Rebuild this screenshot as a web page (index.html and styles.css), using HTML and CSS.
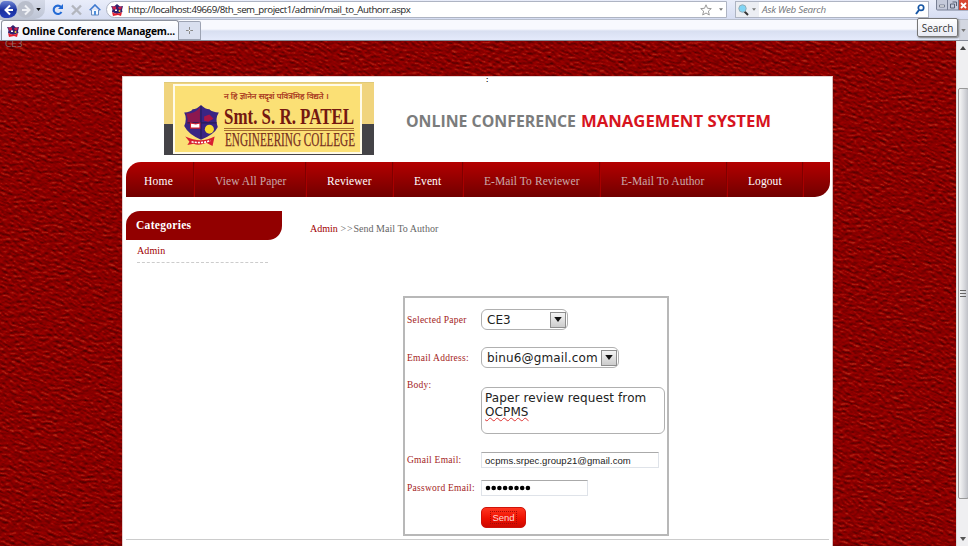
FILE: index.html
```html
<!DOCTYPE html>
<html lang="en">
<head>
<meta charset="utf-8">
<title>Online Conference Management System</title>
<link rel="stylesheet" href="styles.css">
</head>
<body>
<svg width="0" height="0" class="defs" aria-hidden="true">
  <symbol id="crest" viewBox="0 0 36 41">
    <path d="M2 8Q8 8 10 5Q14 5 18 1Q22 5 26 5Q29 8 35 8Q31 14 34 22Q31 29 18 34Q6 29 2 21Q5 14 2 8Z" fill="#392584"/>
    <path d="M4 9Q13 9 17 3V19H5Q6 14 4 9Z" fill="#8c174f"/><path d="M21 12l5-2 4 4-5 3-4-1z" fill="#a91645"/>
    <path d="M18 2V33M5 18H33" stroke="#251d58" stroke-width="1"/>
    <path d="M8 18l5 1 4-1v5H8z" fill="#fff" stroke="#cf2031"/><circle cx="26" cy="24" r="4.3" fill="#f7da32"/>
    <path d="M3 31Q18 38 31 31L29 40L23 37Q16 40 11 38L5 39L7 36Z" fill="#d81f31"/><path d="M9 36Q18 38 27 35" stroke="#fff" stroke-width="1.5" stroke-dasharray="2 1" fill="none"/>
  </symbol>
  <symbol id="favicon" viewBox="0 0 12 12">
    <path d="M0 2l3 .5L6 0l3 2.5 3-.5-1 4 .5 2L6 10 1 8l.5-3z" fill="#31206f"/><path d="M1 2.5l4 0 0 3-3 0zM7 3l4-.5-1 3-2 0z" fill="#c91f4b"/><path d="M4 5.5h2v1.500H4z" fill="#fff"/><circle cx="8.5" cy="7" r="1" fill="#f4d636"/><path d="M1 8q5 3 10 0l-1 4-3-1-5 1z" fill="#e51d2c"/>
  </symbol>
  <symbol id="down" viewBox="0 0 6 4"><path d="M0 0h6L3 4z" fill="currentColor"/></symbol>
</svg>
<header class="browser">
  <div class="address-row">
    <div class="history">
      <span class="round back"><svg width="12" height="12" viewBox="0 0 12 12"><path d="M7 1.5L2.5 6 7 10.5M2.5 6H10" stroke="#fff" stroke-width="2" fill="none"/></svg></span>
      <span class="round forward"><svg width="12" height="12" viewBox="0 0 12 12"><path d="M5 1.5L9.500 6 5 10.5M9.500 6H2" stroke="#eef0f5" stroke-width="2" fill="none"/></svg></span>
      <svg class="caret dark" width="5" height="3"><use href="#down"/></svg>
    </div>
    <div class="tools">
      <svg width="12" height="12" viewBox="0 0 12 12"><path d="M9.5 8A4.2 4.2 0 1 1 9 3" fill="none" stroke="#246bd5" stroke-width="2.1"/><path d="M11 0v5H6z" fill="#246bd5"/></svg>
      <svg width="11" height="12" viewBox="0 0 11 12"><path d="M1 1.5l9 9M10 1.5l-9 9" stroke="#b3b6be" stroke-width="2.4"/></svg>
      <svg width="12" height="12" viewBox="0 0 12 12"><path d="M2.5 6v5h7V6" fill="#f5f9ff" stroke="#6689bd"/><path d="M.7 6.3L6 1l5.3 5.3" stroke="#3d78cf" stroke-width="1.6" fill="none"/><path d="M5 7h2v4H5z" fill="#4f8fdb"/></svg>
    </div>
    <div class="address"><svg width="12" height="12"><use href="#favicon"/></svg><span class="url">http://localhost:49669/8th_sem_project1/admin/mail_to_Authorr.aspx</span>
      <svg class="star" width="12" height="12" viewBox="0 0 12 12"><path d="M6 .8l1.5 3.5 3.8.3-2.9 2.5.9 3.9L6 9l-3.3 2 .9-3.9L.7 4.6l3.8-.3z" fill="#fff" stroke="#999"/></svg><svg class="caret" width="4" height="3"><use href="#down"/></svg>
    </div>
    <div class="search"><span class="provider"><svg width="11" height="12" viewBox="0 0 11 12"><path d="M6 7l4 4" stroke="#333" stroke-width="2"/><circle cx="4.5" cy="4.5" r="3.7" fill="#81d5f5" stroke="#91aeb9"/></svg><svg class="caret" width="4" height="3"><use href="#down"/></svg></span><em>Ask Web Search</em><svg width="10" height="11" viewBox="0 0 10 11"><path d="M4 6L1 10" stroke="#1756a4" stroke-width="2"/><circle cx="6" cy="3.7" r="2.7" fill="none" stroke="#1756a4" stroke-width="1.7"/></svg></div>
    <div class="window-buttons"><svg width="32" height="11" viewBox="0 0 32 11"><path d="M.5 0v9q0 1 1 1H32V0" fill="#c5cada" stroke="#777f94"/><path d="M11.5 0v10M22.5 0v10" stroke="#777f94"/><path d="M23 0h9v10h-9z" fill="#d74732"/><path d="M3.5 5h5v2h-5z" fill="#fff" stroke="#555d70" stroke-width=".7"/><path d="M14.500 4h4v4h-4zM16.500 2h4v4" fill="none" stroke="#596174"/><path d="M25 3l5 5M30 3l-5 5" stroke="#fff" stroke-width="1.8"/></svg></div>
  </div>
  <div class="tab-row"><div class="tab"><svg width="12" height="12"><use href="#favicon"/></svg><b>Online Conference Managem...</b></div><div class="new-tab"><svg width="7" height="7"><path d="M3.5 0v7M0 3.5h7" stroke="#888"/><circle cx="3.5" cy="3.5" r=".8" fill="#fff"/></svg></div><div class="tab-menu"><svg class="caret" width="5" height="3"><use href="#down"/></svg></div></div>
  <div class="tooltip">Search</div>
</header>
<div class="viewport">
  <svg class="texture" width="957" height="506" aria-hidden="true">
    <filter id="leather" x="0" y="0" width="100%" height="100%" color-interpolation-filters="sRGB">
      <feTurbulence type="fractalNoise" baseFrequency=".2 .38" numOctaves="3" seed="8" result="noise"/>
      <feColorMatrix type="matrix" values="0 0 0 0 1 0 0 0 0 1 0 0 0 0 1 1 0 0 0 0" result="height"/>
      <feDiffuseLighting in="height" surfaceScale=".9" diffuseConstant="1.08" lighting-color="#fff" result="light"><feDistantLight azimuth="245" elevation="48"/></feDiffuseLighting>
      <feColorMatrix in="light" type="matrix" values=".85 0 0 0 -.145 1.2 0 0 0 -1.04 .7 0 0 0 -.61 0 0 0 0 1"/>
    </filter>
    <g transform="rotate(24 480 250)"><rect x="-200" y="-300" width="1360" height="1100" filter="url(#leather)"/></g>
  </svg>
  <span class="status">CE3</span>
  <main class="page">
    <div class="mark">:</div>
    <div class="banner">
      <div class="logo"><div class="plate"><svg width="187" height="69" viewBox="0 0 187 69">
        <use href="#crest" x="8" y="19" width="38" height="43"/>
        <text x="50" y="14" class="motto" textLength="105" lengthAdjust="spacingAndGlyphs">न हि ज्ञानेन सदृशं पवित्रमिह विद्यते ।</text>
        <text x="50" y="39" class="college" textLength="130" lengthAdjust="spacingAndGlyphs">Smt. S. R. PATEL</text>
        <path d="M50 43.500h130M50 45.500h130" stroke="#a66c2e"/>
        <text x="51" y="61" class="college-sub" textLength="130" lengthAdjust="spacingAndGlyphs">ENGINEERING COLLEGE</text>
      </svg></div></div>
      <svg class="heading" width="370" height="24"><text x="0" y="18" textLength="170" lengthAdjust="spacingAndGlyphs" fill="#7b7c7c">ONLINE CONFERENCE</text><text x="175" y="18" textLength="190" lengthAdjust="spacingAndGlyphs" fill="#d7141e">MANAGEMENT SYSTEM</text></svg>
    </div>
    <nav><a class="home">Home</a><a class="papers dim">View All Paper</a><a class="reviewer">Reviewer</a><a class="event">Event</a><a class="mail-reviewer dim">E-Mail To Reviewer</a><a class="mail-author dim">E-Mail To Author</a><a class="logout">Logout</a></nav>
    <div class="columns">
      <aside><h2>Categories</h2><a>Admin</a></aside>
      <section>
        <div class="crumbs"><a>Admin</a> <span class="arrows">&gt;&gt;</span>Send Mail To Author</div>
        <form>
          <label>Selected Paper</label><div class="select paper"><span>CE3</span><i><svg width="8" height="5"><use href="#down"/></svg></i></div>
          <label>Email Address:</label><div class="select email"><span>binu6@gmail.com</span><i><svg width="8" height="5"><use href="#down"/></svg></i></div>
          <label class="body-label">Body:</label><div class="message">Paper review request from <span class="misspelled">OCPMS</span></div>
          <label>Gmail Email:</label><div class="input">ocpms.srpec.group21@gmail.com</div>
          <label>Password Email:</label><div class="input password"><svg width="46" height="6"><path d="M3 3H44" stroke="#000" stroke-width="4.6" stroke-linecap="round" stroke-dasharray="0 5.7"/></svg></div>
          <span></span><div class="send"><span>Send</span></div>
        </form>
      </section>
    </div>
    <hr>
  </main>
  <div class="scrollbar"><svg class="up" width="6" height="4" viewBox="0 0 6 4"><path d="M0 4h6L3 0z" fill="#444"/></svg><div class="thumb"><i></i><i></i><i></i></div><svg class="bottom" width="6" height="4"><use href="#down"/></svg></div>
</div>
</body>
</html>
```
FILE: styles.css
```css
* { box-sizing: border-box; }
body { margin: 0; width: 968px; height: 546px; overflow: hidden; font-family: "Liberation Serif", serif; }
svg { display: block; flex: none; }
.defs { position: absolute; }
.browser { position: relative; height: 41px; font-family: "Open Sans", sans-serif; border-bottom: 1px solid #858995; background: #e2e6f5; }
.address-row { height: 19px; display: flex; background: linear-gradient(#e9edfa, #d6ddf2); }
.history { display: flex; width: 45px; align-items: center; height: 19px; background: linear-gradient(#d5dae8,#bdc4d4); border-radius: 0 0 10px 0; }
.round { display: grid; place-items: center; width: 17px; height: 17px; border-radius: 9px; }
.back { background: linear-gradient(#6c83d3,#1931a0 55%,#243eb9); border-radius: 5px 9px 9px 5px; }
.forward { background: #b9becb; margin-right: 2px; }
.caret { color: #777; }
.caret.dark { color: #111; }
.tools { display: flex; align-items: center; gap: 7px; width: 61px; padding-left: 7px; }
.address { width: 621px; height: 17px; margin-top: 1px; display: flex; align-items: center; background: #fff; border: 1px solid #aeb4c3; border-radius: 9px 0 0 9px; padding-left: 4px; }
.url { flex: 1; padding-left: 5px; font-size: 9.7px; line-height: 16px; letter-spacing: -.48px; color: #222; white-space: nowrap; }
.star { margin-right: 7px; }
.address > .caret { margin-right: 3px; }
.search { width: 194px; height: 17px; margin: 1px 0 0 8px; display: flex; align-items: center; background: #fff; border: 1px solid #aeb4c3; padding-right: 3px; }
.provider { display: flex; align-items: center; height: 15px; width: 23px; padding-left: 2px; gap: 3px; background: #eceef3; }
.search em { flex: 1; padding-left: 3px; color: #72757a; font-size: 9.8px; letter-spacing: -.28px; line-height: 17px; }
.window-buttons { margin-left: 7px; }
.tab-row { height: 21px; display: flex; border-top: 1px solid #b9bfcc; background: linear-gradient(#f8f9fe 0 45%,#d8dff1 55%,#e5eafb); }
.tab { width: 178px; margin-left: 1px; border: 1px solid #8d929e; border-bottom: 0; border-radius: 3px 3px 0 0; display: flex; align-items: center; padding-left: 5px; gap: 3px; background: linear-gradient(#fff,#edf1fd); font-size: 10.3px; letter-spacing: -.17px; white-space: nowrap; }
.new-tab { width: 22px; margin-top: 1px; display: grid; place-items: center; border: 1px solid #9da3b3; border-left: 0; background: #d9dfef; border-radius: 0 2px 0 0; }
.tab-menu { display: grid; place-items: center; margin-left: auto; width: 9px; background: #d3d7e1; }
.tooltip { position: absolute; left: 917px; top: 18px; width: 41px; height: 19px; border: 1px solid #767676; border-radius: 2px; box-shadow: 1px 1px 2px #777; background: linear-gradient(#fff,#e8eaf3); font-size: 10px; line-height: 18px; text-align: center; color: #333; }
.viewport { position: relative; height: 505px; display: flex; overflow: hidden; background: #860000; }
.texture { position: absolute; left: 0; top: 0; }
.status { position: absolute; left: 5px; top: -2px; font: 9px/11px "DejaVu Sans", sans-serif; color: #8a6868; }
.page { position: relative; width: 711px; height: 470px; margin: 35px 0 0 122px; padding: 0 3px; background: #fff; border-left: 1px solid #e5cfcf; border-right: 1px solid #d8bcbc; border-top: 1px solid #e5cfcf; }
.mark { height: 5px; padding-left: 360px; font: bold 7px/5px "Liberation Sans", sans-serif; }
.banner { display: flex; height: 80px; padding-left: 38px; }
.logo { width: 210px; height: 73px; padding: 1px 12px 2px 9px; background: linear-gradient(#f0d47d 0 41px,#444347 41px); border-top: 1px solid #dfc97a; }
.plate { border: 2px solid #fffbe8; background: #fbe075; width: 189px; height: 70px; }
.plate svg { margin: -1px; }
.motto { font-family: "Noto Sans", sans-serif; font-size: 8px; fill: #a52d19; stroke: #a52d19; stroke-width: .2px; }
.college { font-family: "Liberation Serif", serif; font-weight: bold; font-size: 24px; fill: #741811; }
.college-sub { font-family: "Liberation Serif", serif; font-size: 18px; fill: #78301f; stroke: #78301f; stroke-width: .25px; }
.heading { margin: 27px 0 0 32px; font: bold 16.5px "Open Sans", sans-serif; }
nav { width: 704px; height: 35px; display: flex; border-radius: 15px 0 15px 0; background: linear-gradient(#b40000,#710000); overflow: hidden; }
nav a { height: 35px; padding-left: 21px; font-size: 11.5px; line-height: 38px; letter-spacing: .08px; color: #fff; border-right: 1px solid #800000; box-shadow: 1px 0 #a80000; white-space: nowrap; }
nav .dim { color: #c9aaaa; }
.home { width: 68px; padding-left: 18px; letter-spacing: .25px; }
.papers { width: 112px; }
.reviewer { width: 87px; }
.event { width: 70px; }
.mail-reviewer { width: 137px; }
.mail-author { width: 127px; }
.logout { width: 76px; }
.columns { display: flex; height: 342px; }
aside { width: 156px; padding-top: 14px; color: #a00000; font-size: 10px; }
h2 { margin: 0; height: 29px; padding-left: 10px; border-radius: 14px 0 14px 0; background: #920000; color: #fff; font-size: 11.5px; line-height: 29px; letter-spacing: .3px; }
aside a { display: block; margin: 0 14px 0 11px; height: 23px; line-height: 21px; border-bottom: 1px dashed #ccc; letter-spacing: .1px; }
section { padding: 26px 0 0 28px; }
.crumbs { height: 12px; font-size: 10px; line-height: 11px; letter-spacing: .02px; color: #666; white-space: nowrap; }
.crumbs a { color: #a00000; }
.arrows { letter-spacing: .9px; }
form { display: grid; grid-template-columns: 74px 1fr; grid-template-rows: 37px 39px 69px 28px 28px 32px; width: 266px; height: 240px; margin: 61px 0 0 93px; padding: 3px 2px 0 2px; border: 2px solid #b8b8b8; align-items: center; }
label { color: #a31b1b; font-size: 9.5px; letter-spacing: .25px; white-space: nowrap; }
.select { height: 21px; border: 1px solid #b0b0b0; border-radius: 6px; display: flex; align-items: center; padding: 0 1px 0 5px; justify-content: space-between; font: 12px "DejaVu Sans", sans-serif; color: #222; }
.select i { width: 16px; height: 16px; border: 1px solid #8e8e8e; background: linear-gradient(#f4f4f4,#ccc); display: grid; place-items: center; color: #111; }
.paper { width: 87px; }
.email { width: 138px; letter-spacing: .15px; }
.body-label { align-self: start; padding-top: 3px; }
.message { width: 184px; height: 47px; align-self: start; margin-top: 10px; border: 1px solid #b0b0b0; border-radius: 6px; padding: 3px; font: 12px/14px "DejaVu Sans", sans-serif; letter-spacing: .11px; color: #222; }
.misspelled { text-decoration: underline wavy #d33 1px; text-underline-offset: 1px; }
.input { width: 178px; height: 16px; border: 1px solid #dfe3e9; border-top-color: #aaa; padding-left: 3px; font: 9.5px/15px "Liberation Sans", sans-serif; letter-spacing: .05px; color: #222; }
.password { width: 107px; display: flex; align-items: center; }
.send { width: 45px; height: 21px; margin-top: -1px; border: 1px solid #cf1309; border-radius: 5px; display: grid; place-items: center; background: linear-gradient(#ff3520,#ee1000 55%,#cc0800); font: 9.5px "Liberation Sans", sans-serif; color: #ffd9d4; }
.send span { border: 1px dotted #a20b05; padding: 0 1px; }
hr { margin: 0; border: 0; border-top: 1px solid #ccc; }
.scrollbar { position: relative; width: 12px; height: 505px; margin-left: auto; background: #efeff1; border-left: 1px solid #ddd; display: flex; flex-direction: column; align-items: center; }
.up { margin-top: 5px; }
.thumb { width: 11px; height: 411px; margin: 38px 0 0 1px; border: 1px solid #999; border-radius: 2px; background: linear-gradient(90deg,#f7f7f7,#dadbdf 55%,#bfc1c7); display: flex; flex-direction: column; align-items: center; justify-content: center; gap: 2px; }
.thumb i { width: 6px; height: 1px; background: #666; }
.bottom { margin-top: auto; margin-bottom: 5px; color: #555; }
```
